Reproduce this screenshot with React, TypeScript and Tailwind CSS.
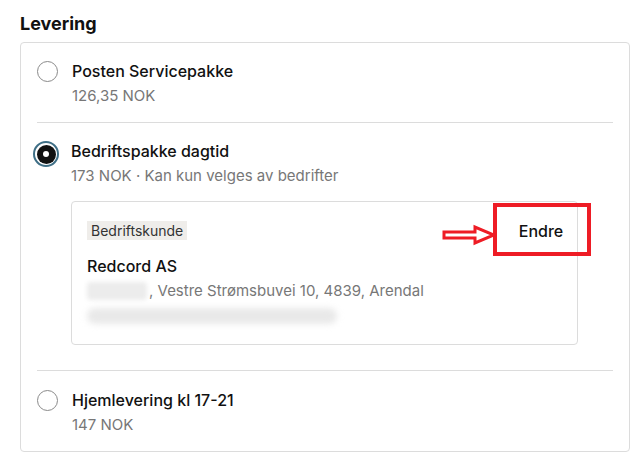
import React from "react";

interface Option {
  id: string;
  title: string;
  sub: string;
}

const options: Option[] = [
  { id: "service", title: "Posten Servicepakke", sub: "126,35 NOK" },
  { id: "bedrift", title: "Bedriftspakke dagtid", sub: "173 NOK · Kan kun velges av bedrifter" },
  { id: "hjem", title: "Hjemlevering kl 17-21", sub: "147 NOK" },
];

const Radio = ({ checked }: { checked: boolean }) =>
  checked ? (
    <span className="-ml-[4px] mr-[-2px] flex h-[26px] w-[26px] shrink-0 items-center justify-center rounded-full border-2 border-[#3f6f86] bg-white">
      <span className="flex h-[19px] w-[19px] items-center justify-center rounded-full bg-[#111]">
        <span className="h-[6px] w-[6px] rounded-full bg-white" />
      </span>
    </span>
  ) : (
    <span className="block h-[21px] w-[21px] shrink-0 rounded-full border-[1.5px] border-[#8a8a8a] bg-white" />
  );

const CompanyBox = () => (
  <div className="relative mt-[12px] h-[144px] w-[507px] rounded border border-[#dcdcdc] bg-white px-[15px] pt-[19px]">
    <div className="w-fit bg-[#efedea] px-[4px] text-[14px] leading-[19px] text-[#333]">Bedriftskunde</div>
    <div className="mt-[15px] text-[16px] font-medium leading-[22px] text-[#111]">Redcord AS</div>
    <div className="mt-[3px] flex items-center text-[15px] leading-[22px] text-[#777]">
      <span className="mr-[2px] h-[18px] w-[60px] rounded-sm bg-[#ececec] blur-[2px]" />
      <span>, Vestre Strømsbuvei 10, 4839, Arendal</span>
    </div>
    <div className="mt-[6px] flex items-center">
      <span className="h-[16px] w-[250px] rounded-full bg-[#e9e9e9] blur-[3px]" />
    </div>

    <button className="absolute right-[-9px] top-[17px] w-[90px] text-center text-[16px] font-medium text-[#111]">Endre</button>
    <span className="absolute left-[421px] top-[1px] h-[53px] w-[98px] border-4 border-[#ee1c25]" />
    <svg className="absolute left-[369px] top-[22px]" width="56" height="22" viewBox="0 0 56 22">
      <path
        d="M3 8 H34 V3 L53 11 L34 19 V14 H3 Z"
        fill="none"
        stroke="#ee1c25"
        strokeWidth="3"
        strokeLinejoin="miter"
      />
    </svg>
  </div>
);

export default function App() {
  return (
    <div className="min-h-screen bg-white px-5 pt-[12px] font-['Inter',sans-serif]">
      <h2 className="text-[18px] font-bold leading-[24px] text-[#111]">Levering</h2>
      <div className="mt-[6px] w-[610px] rounded border border-[#dcdcdc] px-4">
        {options.map((o, i) => (
          <div
            key={o.id}
            className={
              i === 0
                ? "flex gap-[14px] border-b border-[#dcdcdc] pt-[16px] pb-[13px]"
                : i === 1
                ? "flex gap-[14px] border-b border-[#dcdcdc] pt-[16px] pb-[25px]"
                : "flex gap-[14px] pt-[17px] pb-[13px]"
            }
          >
            <div className="pt-[2px]">
              <Radio checked={o.id === "bedrift"} />
            </div>
            <div>
              <div className="text-[16px] font-medium leading-[24px] text-[#111]">{o.title}</div>
              <div className="text-[15px] leading-[26px] text-[#777]">{o.sub}</div>
              {o.id === "bedrift" && <CompanyBox />}
            </div>
          </div>
        ))}
      </div>
    </div>
  );
}
